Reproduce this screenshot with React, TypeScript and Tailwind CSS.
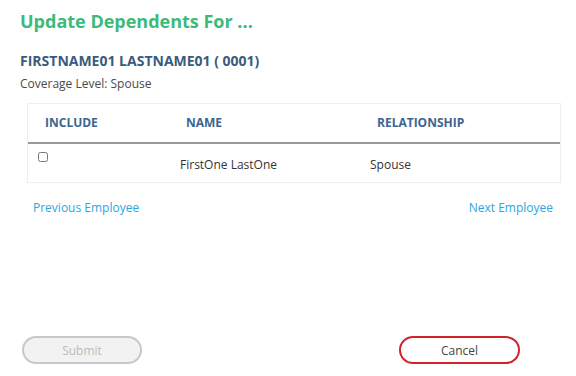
import React from "react";

const App = () => {
    return (
        <div className="w-[576px] h-[376px] bg-white flex flex-col text-[#333] font-['Open_Sans',sans-serif]">
            <div className="pl-5 pt-[9px]">
                <h1 className="text-[18px] leading-[24px] font-bold text-[#3dba7a]">Update Dependents For ...</h1>
                <h2 className="mt-[18px] text-[14px] leading-[20px] font-bold text-[#3b5b7c]">
                    FIRSTNAME01 LASTNAME01 ( 0001)
                </h2>
                <p className="mt-[5px] text-[12px] leading-[16px] text-[#4a4a4a]">Coverage Level: Spouse</p>
            </div>

            <div className="ml-[27px] mt-[11px] w-[534px] border border-[#eeeeee]">
                <div className="grid grid-cols-[141px_191px_1fr] h-[40px] items-center border-b-2 border-[#999] text-[12px] font-bold text-[#3b6590]">
                    <div className="pl-[17px]">INCLUDE</div>
                    <div className="pl-[17px]">NAME</div>
                    <div className="pl-[17px]">RELATIONSHIP</div>
                </div>
                <div className="grid grid-cols-[141px_191px_1fr] h-[38px] text-[12px] text-[#333]">
                    <div className="pl-[10px] pt-[8px]">
                        <input type="checkbox" className="w-[10px] h-[10px] m-0 align-top" />
                    </div>
                    <div className="pl-[11px] pt-[4px] flex items-center">FirstOne LastOne</div>
                    <div className="pl-[10px] pt-[4px] flex items-center">Spouse</div>
                </div>
            </div>

            <div className="ml-[33px] mr-[23px] mt-[17px] flex justify-between text-[12px] leading-[16px] text-[#2aa7df]">
                <a>Previous Employee</a>
                <a>Next Employee</a>
            </div>

            <div className="mt-auto mb-[12px] ml-[22px] mr-[56px] flex justify-between">
                <button className="w-[120px] h-[28px] pt-[2px] rounded-full border-2 border-[#c8c8c8] bg-[#f2f2f2] text-[12px] text-[#bbbbbb]">
                    Submit
                </button>
                <button className="w-[121px] h-[28px] pt-[2px] rounded-full border-2 border-[#d3222c] bg-white text-[12px] text-[#444]">
                    Cancel
                </button>
            </div>
        </div>
    );
};

export default App;
